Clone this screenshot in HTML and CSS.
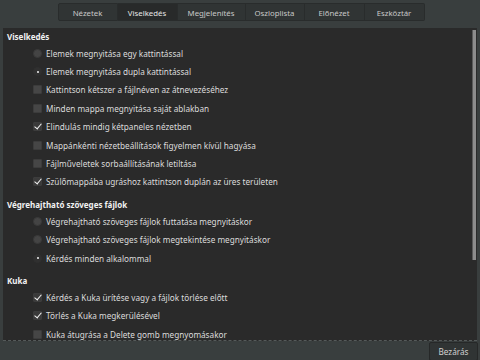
FILE: index.html
```html
<!DOCTYPE html>
<html lang="hu">
<head>
    <meta charset="UTF-8">
    <title>Beállítások</title>
    <link rel="stylesheet" href="styles.css">
</head>
<body>
    <div class="tabs">
        <a class="tab" href="javascript:;">Nézetek</a>
        <a class="tab active" href="javascript:;">Viselkedés</a>
        <a class="tab w68" href="javascript:;">Megjelenítés</a>
        <a class="tab w59" href="javascript:;">Oszloplista</a>
        <a class="tab" href="javascript:;">Előnézet</a>
        <a class="tab" href="javascript:;">Eszköztár</a>
    </div>
    <div class="panel">
        <div class="scroll"></div>
        <div class="section first">
            <h2>Viselkedés</h2>
            <div class="item"><span class="radio"></span>Elemek megnyitása egy kattintással</div>
            <div class="item"><span class="radio on"></span>Elemek megnyitása dupla kattintással</div>
            <div class="item"><span class="check"></span>Kattintson kétszer a fájlnéven az átnevezéséhez</div>
            <div class="item"><span class="check"></span>Minden mappa megnyitása saját ablakban</div>
            <div class="item"><span class="check on"></span>Elindulás mindig kétpaneles nézetben</div>
            <div class="item"><span class="check"></span>Mappánkénti nézetbeállítások figyelmen kívül hagyása</div>
            <div class="item"><span class="check"></span>Fájlműveletek sorbaállításának letiltása</div>
            <div class="item"><span class="check on"></span>Szülőmappába ugráshoz kattintson duplán az üres területen</div>
        </div>
        <div class="section">
            <h2>Végrehajtható szöveges fájlok</h2>
            <div class="item"><span class="radio"></span>Végrehajtható szöveges fájlok futtatása megnyitáskor</div>
            <div class="item"><span class="radio"></span>Végrehajtható szöveges fájlok megtekintése megnyitáskor</div>
            <div class="item"><span class="radio on"></span>Kérdés minden alkalommal</div>
        </div>
        <div class="section">
            <h2>Kuka</h2>
            <div class="item"><span class="check on"></span>Kérdés a Kuka ürítése vagy a fájlok törlése előtt</div>
            <div class="item"><span class="check on"></span>Törlés a Kuka megkerülésével</div>
            <div class="item"><span class="check"></span>Kuka átugrása a Delete gomb megnyomásakor</div>
        </div>
    </div>
    <div class="footer">
        <a class="btn" href="javascript:;">Bezárás</a>
    </div>
</body>
</html>
```
FILE: styles.css
```css
body {
    margin: 0;
    padding: 0;
    width: 480px;
    height: 360px;
    overflow: hidden;
    background-color: #393e3e;
    font-family: "Noto Sans", "DejaVu Sans", sans-serif;
    font-size: 8.2px;
    color: #dcdcdc;
}
.tabs {
    display: flex;
    width: 367px;
    height: 18px;
    margin: 3px auto 0;
    padding-left: 2px;
    font-size: 7.8px;
}
.tab {
    width: 60px;
    height: 18px;
    line-height: 18px;
    text-align: center;
    text-decoration: none;
    color: #c8c8c8;
    background-color: #303434;
    border: 1px solid #292c2c;
    border-left: 0;
    box-sizing: border-box;
}
.tab:first-child {
    border-left: 1px solid #292c2c;
    border-radius: 2px 0 0 2px;
}
.tab:last-child {
    border-radius: 0 2px 2px 0;
}
.tab.w68 {
    width: 68px;
}
.tab.w59 {
    width: 59px;
}
.tab.active {
    background-color: #282a2a;
    color: #e6e6e6;
}
.panel {
    position: relative;
    height: 313px;
    margin: 7px 3px 0;
    padding-top: 1px;
    box-sizing: border-box;
    background-color: #2a2a2a;
    border-bottom: 1px dashed #555a5a;
    overflow: hidden;
}
.scroll {
    position: absolute;
    right: 1px;
    top: 2px;
    width: 3px;
    height: 230px;
    background-color: #8c8c8c;
    border-left: 1px solid #5a5a5a;
}
.section {
    padding-top: 6px;
}
.section.first {
    padding-top: 0;
}
h2 {
    margin: 0;
    height: 15px;
    line-height: 15px;
    padding-left: 4px;
    font-size: 8px;
    font-weight: bold;
    color: #f2f2f2;
}
.item {
    display: flex;
    align-items: center;
    height: 18.4px;
    padding-left: 30px;
    white-space: nowrap;
}
.radio,
.check {
    width: 9px;
    height: 9px;
    margin-right: 4px;
    flex: none;
    box-sizing: border-box;
    position: relative;
}
.radio {
    border-radius: 50%;
    background-color: #444;
    border: 1px solid #3a3a3a;
}
.radio.on {
    background-color: #303030;
    border-color: #303030;
}
.radio.on::after {
    content: "";
    position: absolute;
    left: 2.5px;
    top: 2.5px;
    width: 2px;
    height: 2px;
    border-radius: 50%;
    background-color: #f0f0f0;
}
.check {
    border-radius: 1px;
    background-color: #464646;
    border: 1px solid #3c3c3c;
}
.check.on {
    background-color: #3a3a3a;
}
.check.on::after {
    content: "";
    position: absolute;
    left: 2px;
    top: -1px;
    width: 3px;
    height: 6px;
    border-right: 1.5px solid #f4f4f4;
    border-bottom: 1.5px solid #f4f4f4;
    transform: rotate(40deg);
}
.footer {
    display: flex;
    justify-content: flex-end;
    padding: 1px 2px 0 0;
}
.btn {
    width: 49px;
    height: 19px;
    line-height: 18px;
    text-align: center;
    text-decoration: none;
    color: #d0d0d0;
    background-color: #303434;
    border: 1px solid #262828;
    border-radius: 2px;
    box-sizing: border-box;
}
```
